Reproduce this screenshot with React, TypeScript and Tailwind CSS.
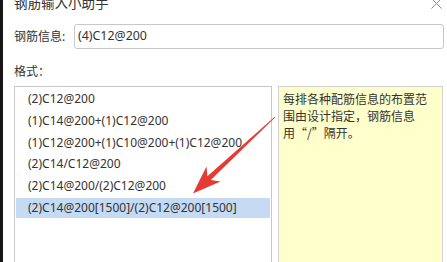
import React from "react";

const items = [
  "(2)C12@200",
  "(1)C14@200+(1)C12@200",
  "(1)C12@200+(1)C10@200+(1)C12@200",
  "(2)C14/C12@200",
  "(2)C14@200/(2)C12@200",
  "(2)C14@200[1500]/(2)C12@200[1500]",
];

export default function App() {
  return (
    <div className="relative w-[447px] h-[262px] overflow-hidden bg-white flex text-[12px] text-[#333333] font-['Noto_Sans','Noto_Sans_CJK_SC',sans-serif]">
      <div className="w-[3px] h-full bg-[#151515] shrink-0" />
      <div className="flex-1 flex flex-col pl-[11px] pr-[3px]">
        <div className="-mt-[4px] h-[15px] flex items-center text-[13.5px] leading-[15px] whitespace-nowrap">
          钢筋输入小助手
        </div>
        <div className="mt-[13px] flex items-center h-[25px]">
          <div className="w-[60px] whitespace-nowrap">钢筋信息:</div>
          <div className="w-[370px] h-[25px] border border-[#c8c8c8] rounded-[3px] flex items-center pl-[3px] text-[12.4px]">
            (4)C12@200
          </div>
        </div>
        <div className="mt-[14px] h-[16px] leading-[16px]">
          格式<span className="font-['Noto_Sans_CJK_SC',sans-serif]">：</span>
        </div>
        <div className="mt-[7px] flex gap-[6px]">
          <div className="w-[258px] h-[200px] border border-[#c8c8c8] p-[1px] pt-[2px] flex flex-col gap-[1.8px]">
            {items.map((t, i) => (
              <div
                key={i}
                className={
                  "h-[20px] flex items-center pl-[12px] whitespace-nowrap " +
                  (i === 5 ? "bg-[#c5dbf3]" : "")
                }
              >
                {t}
              </div>
            ))}
          </div>
          <div className="w-[165px] h-[200px] border border-[#d0d0d0] bg-[#ffffcc] pl-[4px] pt-[5px] leading-[16.5px] whitespace-nowrap">
            每排各种配筋信息的布置范
            <br />
            围由设计指定，钢筋信息
            <br />
            用<span className="font-['Noto_Sans_CJK_SC',sans-serif]">“/”</span>隔开。
          </div>
        </div>
      </div>
      <svg
        className="absolute right-[5px] -top-[2px]"
        width="11"
        height="11"
        viewBox="0 0 11 11"
      >
        <path d="M0.5 0.5 L10.5 10.5 M10.5 0.5 L0.5 10.5" stroke="#8a8a8a" strokeWidth="1" />
      </svg>
      <svg className="absolute left-0 top-0" width="447" height="262" viewBox="0 0 447 262">
        <polygon
          points="275.3,117.3 210.8,179.9 220.5,181.5 193,193.5 206.5,166.6 207.4,176.3 274.7,116.7"
          fill="#e53b35"
        />
      </svg>
    </div>
  );
}
